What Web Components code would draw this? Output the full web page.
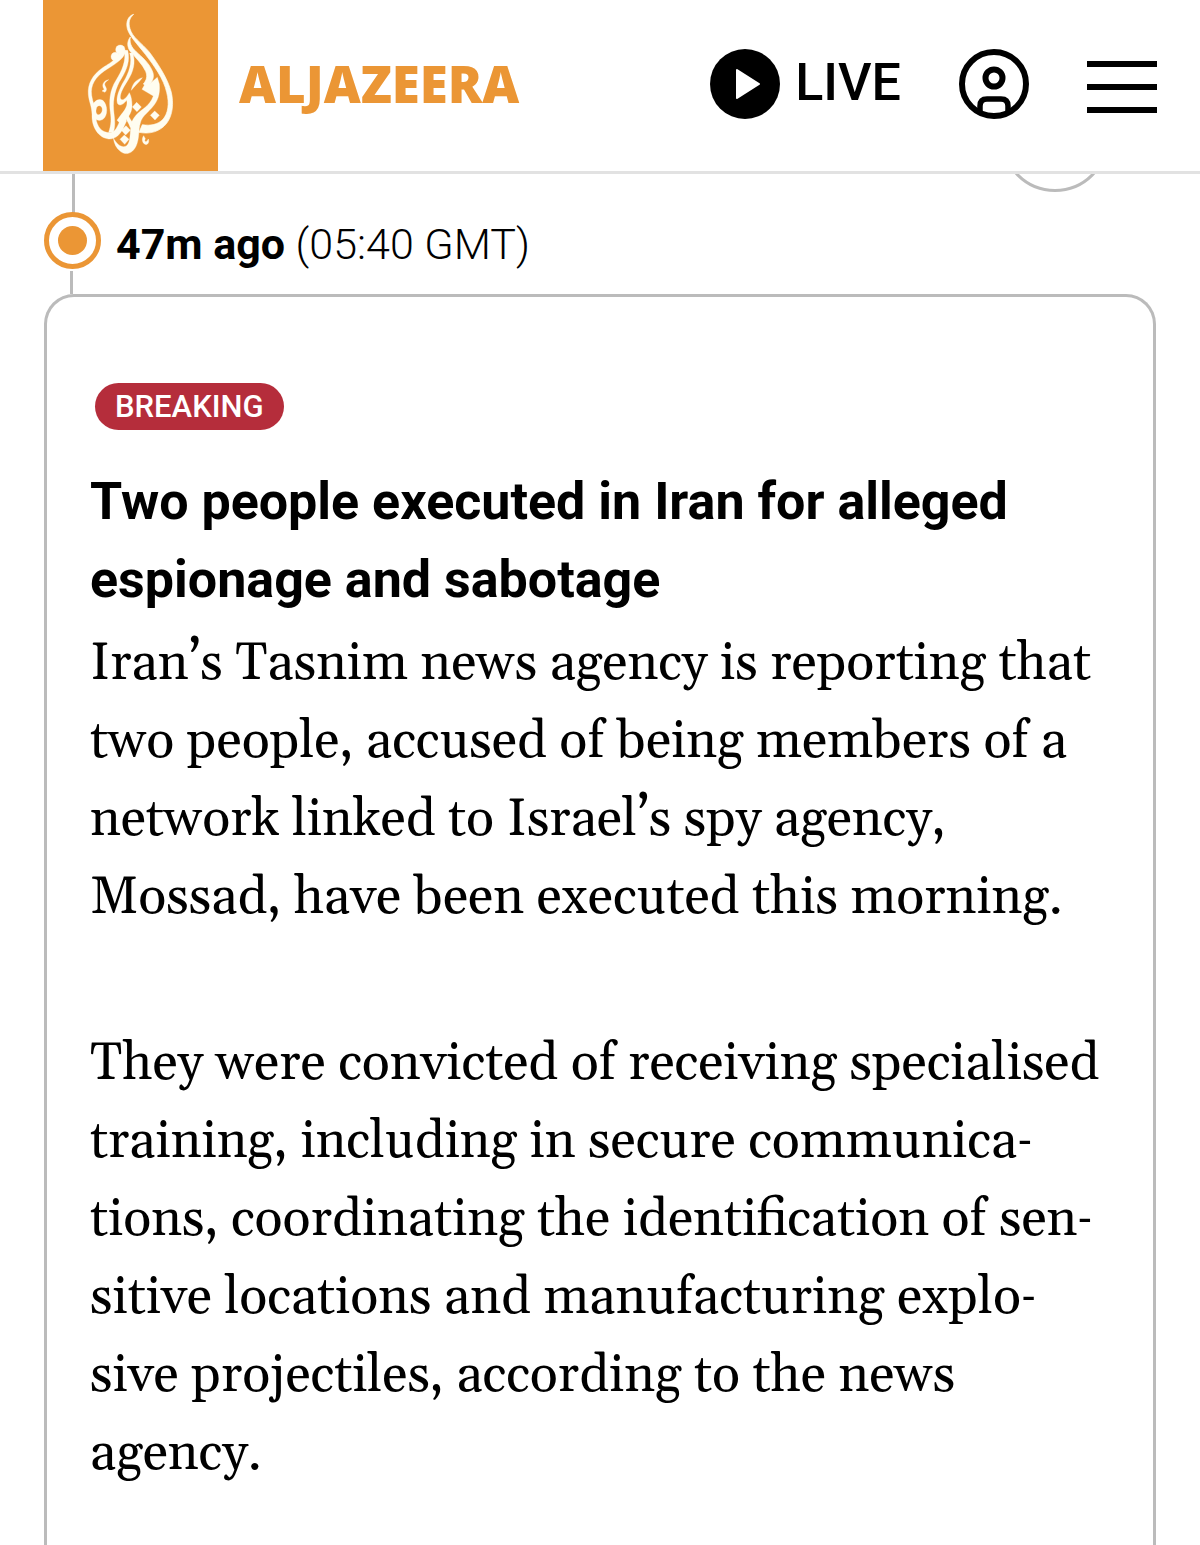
<!DOCTYPE html>
<html lang="en">
<head>
<meta charset="utf-8">
<meta name="viewport" content="width=device-width, initial-scale=1">
<title>Al Jazeera Live</title>
<style>
  body {
    margin: 0;
    background: #fff;
    color: #000;
    font-family: Roboto, "Liberation Sans", sans-serif;
    --brand: #eb9635;
    --rule: #bbb;
    --gutter: 44px;
  }
</style>
</head>
<body>
<live-page>
  <site-header slot="header">ALJAZEERA</site-header>
  <live-update>
    <time-marker slot="time" gmt="05:40 GMT">47m ago</time-marker>
    <breaking-tag slot="tag">BREAKING</breaking-tag>
    <span slot="title">Two people executed in Iran for alleged espionage and sabotage</span>
    <p>Iran’s Tasnim news agency is reporting that two people, accused of being members of a network linked to Israel’s spy agency, Mossad, have been executed this morning.</p>
    <p>They were convicted of receiving specialised training, including in secure communica&shy;tions, coordinating the identification of sen&shy;sitive locations and manufacturing explo&shy;sive projectiles, according to the news agency.</p>
  </live-update>
</live-page>

<script>
function makeTemplate(html) {
  const template = document.createElement("template")
  template.innerHTML = html
  return template
}

const livePageTemplate = makeTemplate(`
  <style>
    :host {
      display: flex;
      flex-direction: column;
      position: relative;
      height: 100vh;
      overflow: hidden;
    }

    main {
      display: flex;
      flex: 1;
      flex-direction: column;
      padding: 0 var(--gutter);
    }

    /* floats over the feed, tucked under the header */
    .float {
      position: absolute;
      top: 84px;
      right: 91px;
      width: 108px;
      height: 108px;
      border: 3px solid var(--rule);
      border-radius: 50%;
      background: #fff;
    }
  </style>
  <button class="float" type="button" aria-label="Share"></button>
  <slot name="header"></slot>
  <main><slot></slot></main>
`)

class LivePage extends HTMLElement {
  constructor() {
    super()
    this.attachShadow({ mode: "open" }).append(livePageTemplate.content.cloneNode(true))
  }
}

const siteHeaderTemplate = makeTemplate(`
  <style>
    :host {
      display: block;
      position: relative;
      z-index: 1;
      background: #fff;
      border-bottom: 3px solid #e2e2e2;
    }

    header, nav, a, button {
      display: flex;
      align-items: center;
    }

    header {
      justify-content: space-between;
      padding: 0 43px;
    }

    a, button {
      color: inherit;
      text-decoration: none;
    }

    button {
      padding: 0;
      border: 0;
      background: none;
    }

    svg {
      display: block;
    }

    .brand {
      gap: 21px;
      color: var(--brand);
      font: 800 51px/72px "Open Sans", "Noto Sans", sans-serif;
    }

    .brand span {
      padding-bottom: 6px;
    }

    nav {
      gap: 58px;
      padding-bottom: 4px;
    }

    .live {
      gap: 15px;
      font-size: 52px;
      font-weight: 500;
      line-height: 70px;
    }

    .live span {
      padding-bottom: 2px;
    }
  </style>
  <header>
    <a class="brand" href="#">
      <svg width="175" height="171" viewBox="40 0 525 513" aria-hidden="true">
        <rect x="40" width="525" height="513" fill="#eb9635"/>
        <g fill="#fffdf0" stroke="#fffdf0">
          <path d="M312 43 C295 48 288 66 293 86 C299 108 322 131 347 163 C374 198 402 237 411 277 C420 312 415 340 400 358 C384 374 362 378 338 374 L328 397 C362 404 392 394 411 370 C430 345 432 309 425 277 C414 235 385 191 358 155 C334 127 308 112 301 86 C295 66 300 54 312 43Z" stroke-width="2"/>
          <path d="M302 111 C291 125 293 141 301 153 C318 174 338 192 348 214 C354 229 351 240 341 252 L354 262 C366 247 374 237 370 219 C363 196 345 178 326 161 C309 146 298 134 302 111Z" stroke-width="2"/>
          <path d="M383 232 L389 252 C392 284 384 304 366 324 C350 342 337 350 332 369 C326 389 330 415 319 439 C307 463 287 466 272 454 C260 445 253 431 251 414 C264 437 279 445 291 437 C304 427 300 396 305 372 C309 353 324 339 343 325 C356 315 366 302 371 288 L337 268 L352 242 L356 255 Z"/>
          <path d="M268 143 C277 168 249 184 219 203 C188 225 173 251 176 284 C178 307 187 319 187 343 C185 382 207 414 237 417 C259 418 272 402 281 384 L291 362 L277 350 L264 377 C257 393 246 400 231 397 C209 392 199 371 198 345 C198 321 189 308 186 286 C182 255 197 232 224 213 C252 194 281 181 289 153Z"/>
          <path d="M284 151 C290 183 277 212 260 239 C239 272 238 305 242 337 C245 357 245 374 237 397 L251 397 C259 374 254 354 252 330 C249 296 258 262 275 236 C292 209 302 181 294 151Z"/>
          <path d="M300 159 C309 188 297 219 283 243 C268 268 259 292 263 309 C269 321 282 313 291 301 C295 316 287 329 275 343 L262 361 L276 374 C292 357 307 340 307 318 C307 301 305 289 299 278 C290 295 278 304 273 297 C269 286 277 268 294 242 C311 216 319 186 309 159Z"/>
          <path d="M187 322 C190 302 212 290 224 306 C237 325 232 358 212 361 C195 363 187 348 187 322Z M200 326 C196 340 204 348 212 342 C222 333 218 317 209 317 C203 317 201 321 200 326Z" fill-rule="evenodd"/>
          <circle cx="272" cy="149" r="14"/>
          <circle cx="257" cy="170" r="13"/>
          <path d="M237 239 C221 242 214 256 224 268 L217 273 L226 277 C236 267 226 261 225 253 C225 247 232 243 237 239Z"/>
          <path d="M338 233 C319 239 308 251 305 271 C315 257 327 249 338 233Z"/>
          <path d="M281 343 L291 335 C295 348 303 359 311 370 L302 383 C297 368 288 356 281 343Z"/>
          <path d="M321 307 L335 321 L322 335 L308 321Z M375 333 L389 346 L376 360 L362 346Z M289 377 L302 391 L288 405 L275 391Z M284 405 L298 418 L285 433 L271 418Z"/>
          <path d="M342 407 L347 416 C343 423 347 427 352 423 L356 417 C360 427 354 436 346 433 C338 429 335 416 342 407Z"/>
        </g>
      </svg>
      <span><slot></slot></span>
    </a>
    <nav>
      <a class="live" href="#">
        <svg width="70" height="70" viewBox="0 0 70 70" aria-hidden="true">
          <circle cx="35" cy="35" r="35"/>
          <path d="M27 21 L49 35 L27 49 Z" fill="#fff" stroke="#fff" stroke-width="2" stroke-linejoin="round"/>
        </svg>
        <span>LIVE</span>
      </a>
      <button type="button" aria-label="Account">
        <svg width="70" height="70" viewBox="0 0 70 70" fill="none" stroke="#000" stroke-width="6" aria-hidden="true">
          <circle cx="35" cy="35" r="32"/>
          <circle cx="35" cy="29" r="8.500"/>
          <path d="M21 62 V57 Q21 50 28 50 H42 Q49 50 49 57 V62" stroke-width="5.500"/>
        </svg>
      </button>
      <button type="button" aria-label="Menu">
        <svg width="70" height="70" viewBox="0 0 70 70" aria-hidden="true">
          <path d="M0 12 H70 V18 H0Z M0 35 H70 V41 H0Z M0 58 H70 V64 H0Z"/>
        </svg>
      </button>
    </nav>
  </header>
`)

class SiteHeader extends HTMLElement {
  constructor() {
    super()
    this.attachShadow({ mode: "open" }).append(siteHeaderTemplate.content.cloneNode(true))
  }
}

const timeMarkerTemplate = makeTemplate(`
  <style>
    :host {
      display: flex;
      gap: 15px;
      height: 120px;
      font-size: 43px;
      line-height: 60px;
    }

    svg {
      display: block;
    }

    .time {
      padding-top: 40px;
      font-weight: 300;
    }

    b {
      font-weight: 700;
    }
  </style>
  <svg width="57" height="120" viewBox="0 0 57 120" aria-hidden="true">
    <path d="M28 0 H31 V40 H28Z M26 97 H29 V120 H26Z" fill="#bbb"/>
    <circle cx="28.500" cy="66.500" r="26" fill="#fff" stroke="#eb9635" stroke-width="5"/>
    <circle cx="28.500" cy="66.500" r="14.500" fill="#eb9635"/>
  </svg>
  <div class="time"><b><slot></slot></b> <span class="gmt"></span></div>
`)

class TimeMarker extends HTMLElement {
  constructor() {
    super()
    const shadow = this.attachShadow({ mode: "open" })
    shadow.append(timeMarkerTemplate.content.cloneNode(true))
    this.gmt = shadow.querySelector(".gmt")
  }

  static get observedAttributes() {
    return ["gmt"]
  }

  attributeChangedCallback(name, oldValue, newValue) {
    if (name === "gmt") this.gmt.textContent = `(${newValue})`
  }
}

const breakingTagTemplate = makeTemplate(`
  <style>
    :host {
      display: block;
      width: fit-content;
      margin-left: 5px;
      padding: 0 20px;
      border-radius: 24px;
      background: #b52d3b;
      color: #fff;
      font-size: 31px;
      font-weight: 500;
      line-height: 47px;
    }
  </style>
  <slot></slot>
`)

class BreakingTag extends HTMLElement {
  constructor() {
    super()
    this.attachShadow({ mode: "open" }).append(breakingTagTemplate.content.cloneNode(true))
  }
}

const liveUpdateTemplate = makeTemplate(`
  <style>
    :host {
      display: flex;
      flex: 1;
      flex-direction: column;
    }

    /* the card runs on past the bottom of the window */
    article {
      flex: 1;
      padding: 86px 48px 0 43px;
      border: 3px solid var(--rule);
      border-bottom: 0;
      border-radius: 30px 30px 0 0;
    }

    h2 {
      margin: 33px 0 6px;
      font-size: 52px;
      font-weight: 700;
      line-height: 78px;
    }

    ::slotted(p) {
      margin: 0 0 88px;
      font-family: Gelasio, Georgia, "Liberation Serif", serif;
      font-size: 52px;
      line-height: 78px;
    }
  </style>
  <slot name="time"></slot>
  <article>
    <slot name="tag"></slot>
    <h2><slot name="title"></slot></h2>
    <slot></slot>
  </article>
`)

class LiveUpdate extends HTMLElement {
  constructor() {
    super()
    this.attachShadow({ mode: "open" }).append(liveUpdateTemplate.content.cloneNode(true))
  }
}

customElements.define("live-page", LivePage)
customElements.define("site-header", SiteHeader)
customElements.define("time-marker", TimeMarker)
customElements.define("breaking-tag", BreakingTag)
customElements.define("live-update", LiveUpdate)
</script>
</body>
</html>
